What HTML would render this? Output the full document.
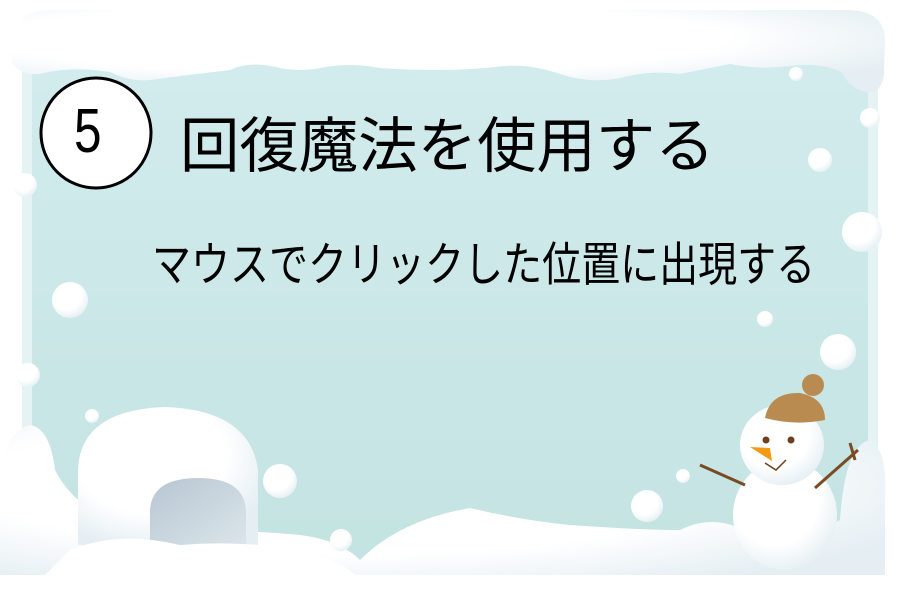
<!DOCTYPE html>
<html><head><meta charset="utf-8"><style>
html,body{margin:0;padding:0;background:#fff;}
.wrap{position:relative;width:900px;height:593px;overflow:hidden;background:#fff;}
svg{position:absolute;left:0;top:0;}
.t{position:absolute;font-family:"Liberation Sans","Noto Sans CJK JP",sans-serif;color:#000;white-space:nowrap;transform-origin:0 0;}
</style></head><body><div class="wrap">
<svg width="900" height="593" viewBox="0 0 900 593">
<defs>
<linearGradient id="bg" x1="0" y1="0" x2="0" y2="1"><stop offset="0" stop-color="#d3ecee"/><stop offset="1" stop-color="#c3e3e1"/></linearGradient>
<radialGradient id="sn" cx="0.4" cy="0.35" r="0.7"><stop offset="0.6" stop-color="#ffffff"/><stop offset="1" stop-color="#e4eef3"/></radialGradient>
<linearGradient id="door" x1="0" y1="0" x2="1" y2="1"><stop offset="0" stop-color="#b7c6d2"/><stop offset="1" stop-color="#dbe5ea"/></linearGradient>
</defs>
<rect x="22" y="40" width="856" height="535" fill="url(#bg)"/>
<rect x="22" y="40" width="10" height="535" fill="#e6f3f4"/>
<rect x="868" y="40" width="10" height="535" fill="#e6f3f4"/>
<path d="M10 40 Q12 12 50 10 L850 10 Q885 12 885 40 L884 75 Q880 95 868 92 Q850 90 842 72 Q820 62 790 66 Q760 70 730 64 Q700 70 680 74 Q650 70 620 78 Q590 84 560 74 Q530 64 505 66 Q470 70 440 70 Q410 70 380 68 Q350 62 320 68 Q300 72 280 68 Q250 60 230 70 Q180 76 150 80 Q130 82 110 72 Q70 66 40 74 Q20 76 12 62 Z" fill="url(#sn)"/>
<path d="M0 593 L0 470 Q8 430 30 425 Q50 428 55 470 Q75 510 130 528 Q250 530 300 535 Q340 540 360 560 Q400 520 470 508 Q520 520 570 525 Q640 530 680 530 Q720 510 760 540 Q800 540 840 520 Q845 445 870 440 Q888 450 885 500 L885 593 Z" fill="url(#sn)"/>
<rect x="0" y="575" width="900" height="18" fill="#fff"/>
<path d="M78 545 L78 470 Q80 410 165 407 Q250 410 258 470 L258 545 Z" fill="url(#sn)"/>
<path d="M150 545 L150 510 Q152 478 198 478 Q244 478 246 510 L246 545 Z" fill="url(#door)"/>
<path d="M70 550 Q120 530 180 545 Q240 540 300 550 Q340 560 355 575 L40 580 Z" fill="#fff"/>
<g fill="url(#sn)">
<circle cx="70" cy="300" r="18"/><circle cx="25" cy="185" r="12"/><circle cx="28" cy="375" r="12"/>
<circle cx="92" cy="416" r="7"/><circle cx="280" cy="481" r="17"/><circle cx="341" cy="540" r="11"/>
<circle cx="647" cy="506" r="16"/><circle cx="683" cy="476" r="7"/><circle cx="838" cy="352" r="18"/>
<circle cx="765" cy="319" r="8"/><circle cx="862" cy="232" r="20"/><circle cx="820" cy="160" r="12"/>
<circle cx="870" cy="118" r="10"/><circle cx="796" cy="74" r="7"/>
</g>
<ellipse cx="785" cy="515" rx="52" ry="55" fill="url(#sn)"/>
<ellipse cx="782" cy="445" rx="42" ry="40" fill="url(#sn)"/>
<path d="M765 418 Q770 392 800 393 Q825 398 825 420 Q795 426 765 418 Z" fill="#b98b51"/>
<circle cx="813" cy="385" r="11" fill="#b98b51"/>
<circle cx="766" cy="440" r="3.5" fill="#6b3f1f"/><circle cx="791" cy="440" r="3.5" fill="#6b3f1f"/>
<path d="M750 447 L770 448 L772 461 Z" fill="#f29a14"/>
<path d="M765 463 L776 470 L786 460" stroke="#6b3f1f" stroke-width="1.5" fill="none"/>
<path d="M700 465 L745 485 M858 450 L815 488 M850 443 L855 460" stroke="#7a4a23" stroke-width="3" fill="none"/>
</svg>
<svg width="900" height="593"><circle cx="96" cy="133" r="55" fill="#fff" stroke="#000" stroke-width="3"/></svg>
<div class="t" style="left:74px;top:96px;font-size:62px;transform:scaleX(0.8);">5</div>
<div class="t" style="left:180px;top:98px;font-size:60px;transform:scaleX(0.99);">回復魔法を使用する</div>
<div class="t" style="left:152px;top:226px;font-size:47px;transform:scaleX(0.83);">マウスでクリックした位置に出現する</div>
</div></body></html>
